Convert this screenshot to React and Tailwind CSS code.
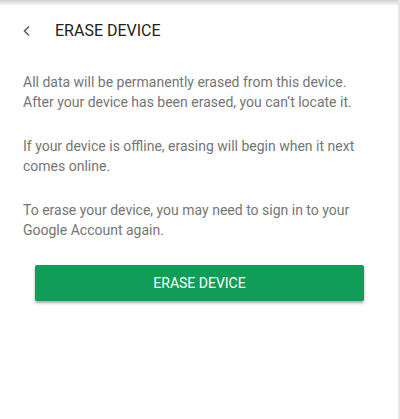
export default function App() {
  return (
    <div className="w-[400px] h-[419px] bg-white relative overflow-hidden font-['Roboto',sans-serif]">
      <div className="h-[6px] bg-gradient-to-b from-[#d0d0d0] to-white" />
      <div className="absolute right-0 top-0 bottom-0 w-[2px] bg-[#e4e8e4]" />
      <div className="flex items-center h-[50px] pl-[21px]">
        <svg width="12" height="12" viewBox="0 0 12 12" className="mr-[22px]">
          <path d="M8 1.5 L3.5 6 L8 10.5" fill="none" stroke="#616161" strokeWidth="1.6" />
        </svg>
        <h1 className="text-[16px] text-[#212121]">ERASE DEVICE</h1>
      </div>
      <div className="px-[23px] pt-[16px] text-[14px] leading-[20px] text-[#757575] flex flex-col gap-[24px]">
        <p>
          All data will be permanently erased from this device.
          <br />
          After your device has been erased, you can’t locate it.
        </p>
        <p>
          If your device is offline, erasing will begin when it next
          <br />
          comes online.
        </p>
        <p>
          To erase your device, you may need to sign in to your
          <br />
          Google Account again.
        </p>
      </div>
      <div className="pl-[35px] pt-[25px]">
        <button className="w-[329px] h-[36px] bg-[#0f9d58] text-white text-[14px] rounded-[2px] shadow-[0_2px_3px_rgba(0,0,0,0.35)]">
          ERASE DEVICE
        </button>
      </div>
    </div>
  );
}
